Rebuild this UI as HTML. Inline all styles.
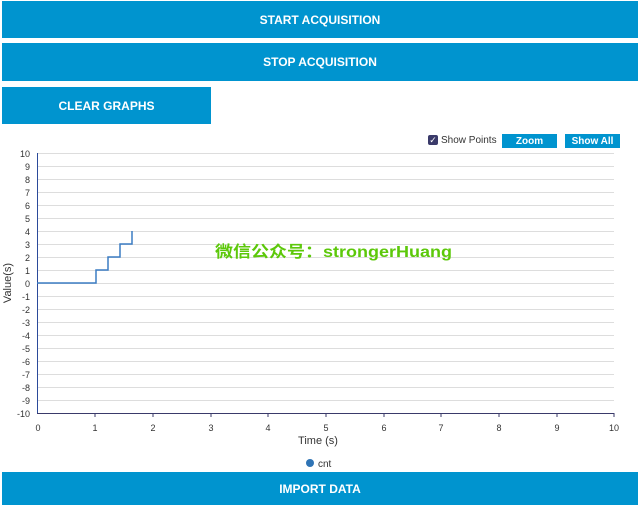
<!DOCTYPE html>
<html><head><meta charset="utf-8"><style>
body{margin:0;width:639px;height:505px;background:#fff;position:relative;overflow:hidden;font-family:"Liberation Sans",sans-serif}
.b{position:absolute;background:#0094cf;color:#fff;font-weight:bold;font-size:12px;display:flex;align-items:center;justify-content:center}
.sb{position:absolute;background:#0094cf;color:#fff;font-weight:bold;font-size:10px;display:flex;align-items:center;justify-content:center;height:14px;top:134px}
</style></head><body>
<div class="b" style="left:2px;top:1px;width:636px;height:37px">START ACQUISITION</div>
<div class="b" style="left:2px;top:43px;width:636px;height:38px">STOP ACQUISITION</div>
<div class="b" style="left:2px;top:87px;width:209px;height:37px">CLEAR GRAPHS</div>
<div style="position:absolute;left:428px;top:135px;width:10px;height:10px;background:#3a3a6a;border-radius:2px;color:#fff;font-size:9px;line-height:10px;text-align:center">✓</div>
<div style="position:absolute;left:441px;top:135px;font-size:10px;color:#333">Show Points</div>
<div class="sb" style="left:502px;width:55px">Zoom</div>
<div class="sb" style="left:565px;width:55px">Show All</div>
<svg width="639" height="505" style="position:absolute;left:0;top:0" font-family="Liberation Sans, sans-serif">
<g stroke="#ddd" stroke-width="1">
<line x1="37" x2="614" y1="153.5" y2="153.5"/><line x1="37" x2="614" y1="166.5" y2="166.5"/><line x1="37" x2="614" y1="179.5" y2="179.5"/><line x1="37" x2="614" y1="192.5" y2="192.5"/><line x1="37" x2="614" y1="205.5" y2="205.5"/><line x1="37" x2="614" y1="218.5" y2="218.5"/><line x1="37" x2="614" y1="231.5" y2="231.5"/><line x1="37" x2="614" y1="244.5" y2="244.5"/><line x1="37" x2="614" y1="257.5" y2="257.5"/><line x1="37" x2="614" y1="270.5" y2="270.5"/><line x1="37" x2="614" y1="283.5" y2="283.5"/><line x1="37" x2="614" y1="296.5" y2="296.5"/><line x1="37" x2="614" y1="309.5" y2="309.5"/><line x1="37" x2="614" y1="322.5" y2="322.5"/><line x1="37" x2="614" y1="335.5" y2="335.5"/><line x1="37" x2="614" y1="348.5" y2="348.5"/><line x1="37" x2="614" y1="361.5" y2="361.5"/><line x1="37" x2="614" y1="374.5" y2="374.5"/><line x1="37" x2="614" y1="387.5" y2="387.5"/><line x1="37" x2="614" y1="400.5" y2="400.5"/>
</g>
<line x1="37.5" x2="37.5" y1="153" y2="413" stroke="#2b4a9a"/>
<line x1="37" x2="614" y1="413.5" y2="413.5" stroke="#3a3a6a"/>
<g stroke="#3a3a6a"><line x1="95" x2="95" y1="413" y2="417"/><line x1="153" x2="153" y1="413" y2="417"/><line x1="211" x2="211" y1="413" y2="417"/><line x1="268" x2="268" y1="413" y2="417"/><line x1="326" x2="326" y1="413" y2="417"/><line x1="384" x2="384" y1="413" y2="417"/><line x1="441" x2="441" y1="413" y2="417"/><line x1="499" x2="499" y1="413" y2="417"/><line x1="557" x2="557" y1="413" y2="417"/><line x1="614" x2="614" y1="413" y2="417"/></g>
<g font-size="9" fill="#333" text-anchor="end">
<text x="30" y="157">10</text><text x="30" y="170">9</text><text x="30" y="183">8</text><text x="30" y="196">7</text><text x="30" y="209">6</text><text x="30" y="222">5</text><text x="30" y="235">4</text><text x="30" y="248">3</text><text x="30" y="261">2</text><text x="30" y="274">1</text><text x="30" y="287">0</text><text x="30" y="300">-1</text><text x="30" y="313">-2</text><text x="30" y="326">-3</text><text x="30" y="339">-4</text><text x="30" y="352">-5</text><text x="30" y="365">-6</text><text x="30" y="378">-7</text><text x="30" y="391">-8</text><text x="30" y="404">-9</text><text x="30" y="417">-10</text>
</g>
<g font-size="9" fill="#333" text-anchor="middle">
<text x="38" y="431">0</text><text x="95" y="431">1</text><text x="153" y="431">2</text><text x="211" y="431">3</text><text x="268" y="431">4</text><text x="326" y="431">5</text><text x="384" y="431">6</text><text x="441" y="431">7</text><text x="499" y="431">8</text><text x="557" y="431">9</text><text x="614" y="431">10</text>
</g>
<text x="318" y="444" font-size="11" fill="#333" text-anchor="middle">Time (s)</text>
<text transform="translate(11,283) rotate(-90)" font-size="11" fill="#333" text-anchor="middle">Value(s)</text>
<polyline points="37,283 96,283 96,270 108,270 108,257 120,257 120,244 132,244 132,231" fill="none" stroke="#3b7dc4" stroke-width="1.5"/>
<circle cx="310" cy="463" r="4" fill="#2f74b5"/>
<text x="318" y="467" font-size="10" fill="#333">cnt</text>
<text x="215" y="257" font-size="16" font-weight="bold" fill="#5cc80a" textLength="237" lengthAdjust="spacingAndGlyphs" font-family="Liberation Sans, Noto Sans CJK SC, sans-serif">微信公众号：strongerHuang</text>
</svg>
<div class="b" style="left:2px;top:472px;width:636px;height:33px">IMPORT DATA</div>
</body></html>
